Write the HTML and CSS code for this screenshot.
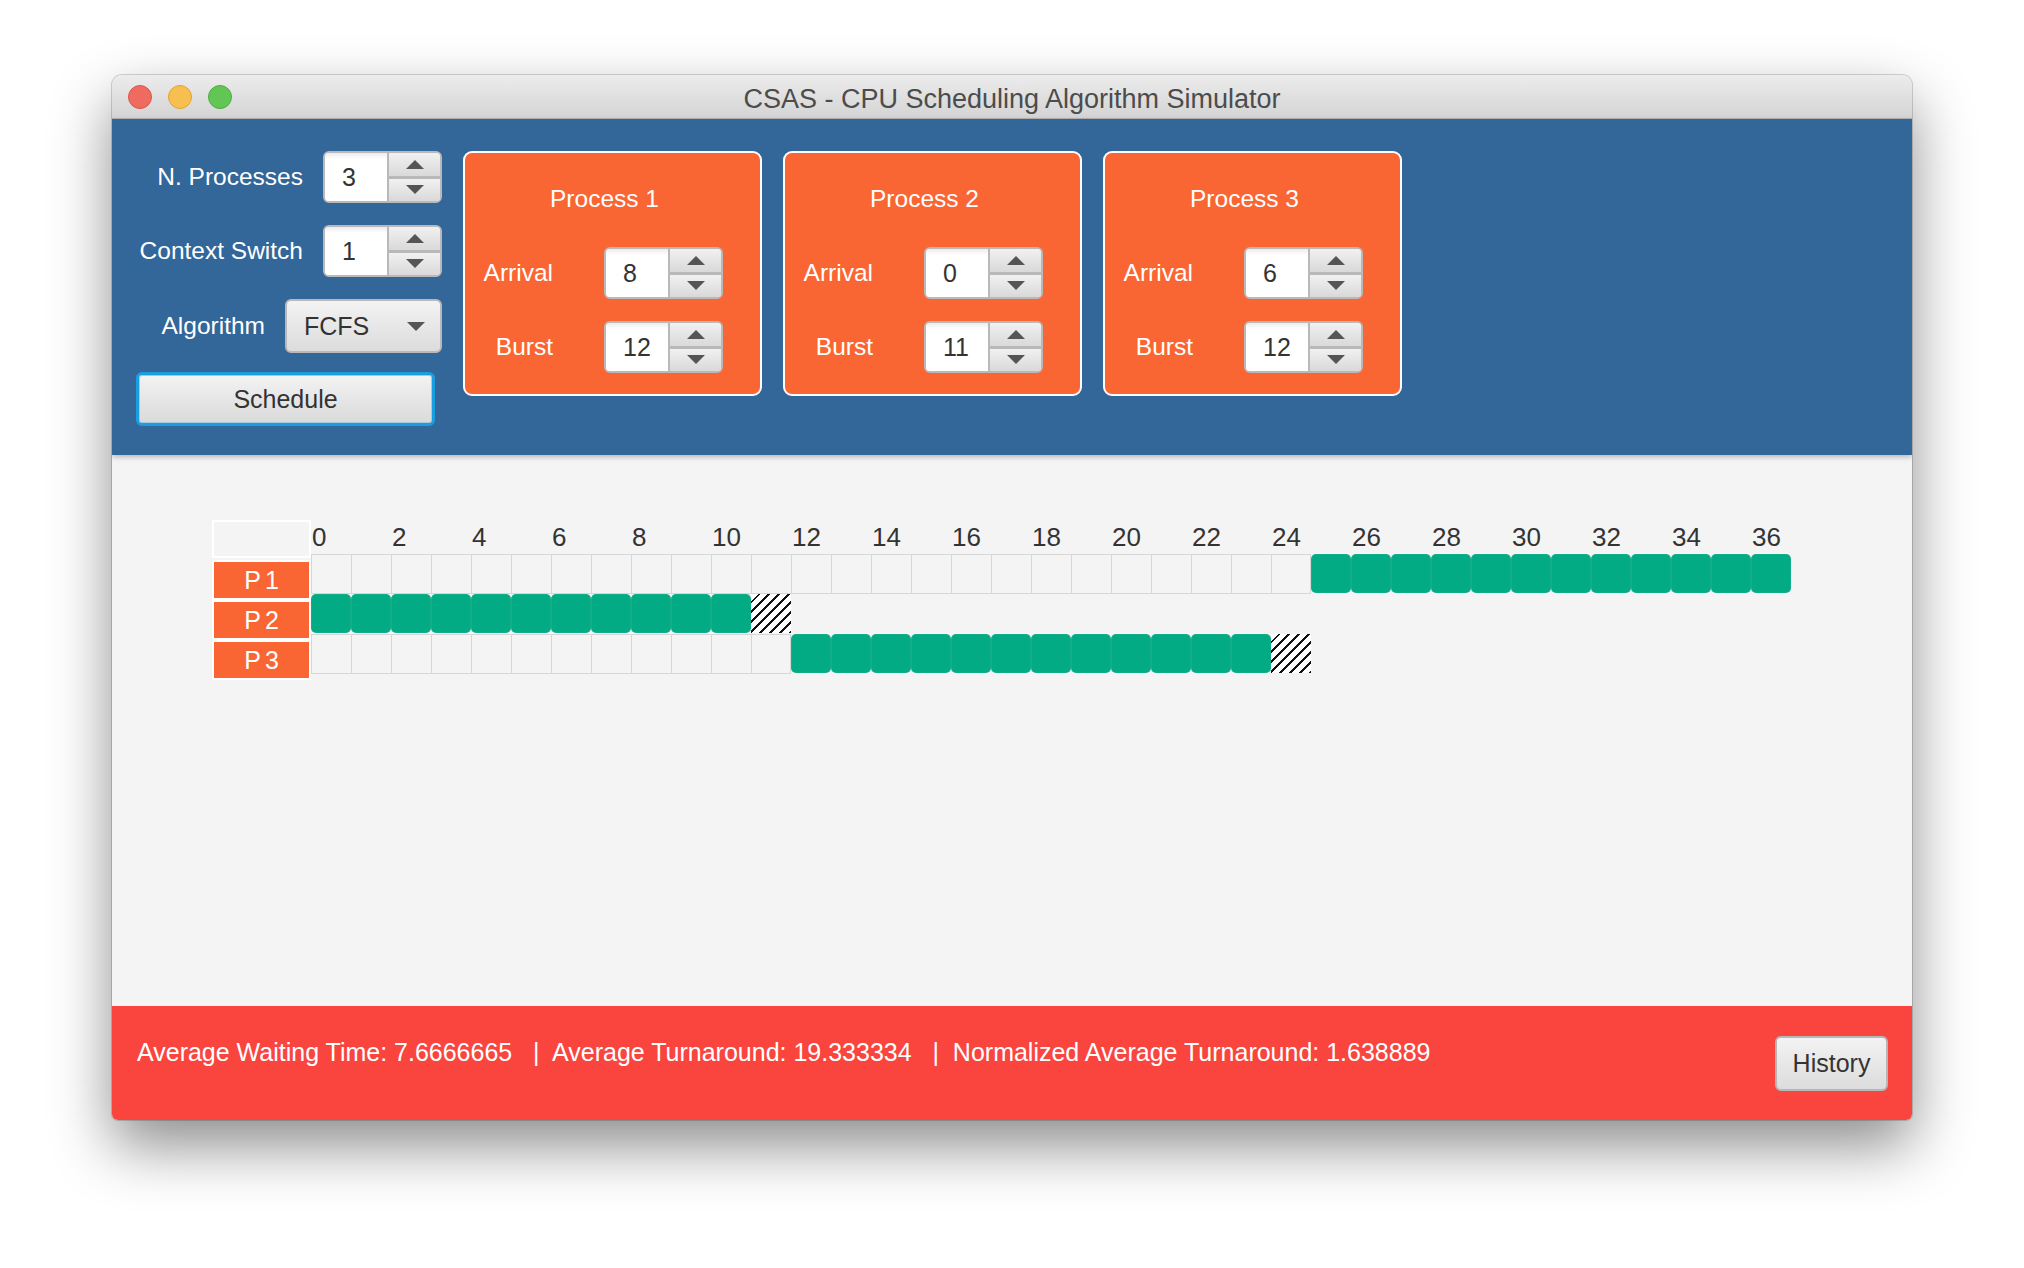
FILE: index.html
```html
<!DOCTYPE html>
<html lang="en">
<head>
<meta charset="utf-8">
<title>CSAS - CPU Scheduling Algorithm Simulator</title>
<link rel="stylesheet" href="styles.css">
</head>
<body>
<div class="window">
  <div class="titlebar">
    <div class="lights"><span class="light red"></span><span class="light yellow"></span><span class="light green"></span></div>
    <div class="title">CSAS - CPU Scheduling Algorithm Simulator</div>
    <div></div>
  </div>

  <div class="controls">
    <div class="form">
      <div class="form-row r1">
        <span class="lbl">N. Processes</span>
        <div class="spinner"><div class="spin-val">3</div><div class="spin-btns"><div class="spin-btn"><span class="arr-up"></span></div><div class="spin-btn down"><span class="arr-down"></span></div></div></div>
      </div>
      <div class="form-row r2">
        <span class="lbl">Context Switch</span>
        <div class="spinner"><div class="spin-val">1</div><div class="spin-btns"><div class="spin-btn"><span class="arr-up"></span></div><div class="spin-btn down"><span class="arr-down"></span></div></div></div>
      </div>
      <div class="form-row r3">
        <span class="lbl">Algorithm</span>
        <div class="combo"><span>FCFS</span><span class="arr-down"></span></div>
      </div>
      <button class="schedule">Schedule</button>
    </div>

    <div class="card">
      <div class="card-title">Process 1</div>
      <div class="card-row"><span class="lbl">Arrival</span>
        <div class="spinner"><div class="spin-val">8</div><div class="spin-btns"><div class="spin-btn"><span class="arr-up"></span></div><div class="spin-btn down"><span class="arr-down"></span></div></div></div>
      </div>
      <div class="card-row"><span class="lbl">Burst</span>
        <div class="spinner"><div class="spin-val">12</div><div class="spin-btns"><div class="spin-btn"><span class="arr-up"></span></div><div class="spin-btn down"><span class="arr-down"></span></div></div></div>
      </div>
    </div>

    <div class="card">
      <div class="card-title">Process 2</div>
      <div class="card-row"><span class="lbl">Arrival</span>
        <div class="spinner"><div class="spin-val">0</div><div class="spin-btns"><div class="spin-btn"><span class="arr-up"></span></div><div class="spin-btn down"><span class="arr-down"></span></div></div></div>
      </div>
      <div class="card-row"><span class="lbl">Burst</span>
        <div class="spinner"><div class="spin-val">11</div><div class="spin-btns"><div class="spin-btn"><span class="arr-up"></span></div><div class="spin-btn down"><span class="arr-down"></span></div></div></div>
      </div>
    </div>

    <div class="card">
      <div class="card-title">Process 3</div>
      <div class="card-row"><span class="lbl">Arrival</span>
        <div class="spinner"><div class="spin-val">6</div><div class="spin-btns"><div class="spin-btn"><span class="arr-up"></span></div><div class="spin-btn down"><span class="arr-down"></span></div></div></div>
      </div>
      <div class="card-row"><span class="lbl">Burst</span>
        <div class="spinner"><div class="spin-val">12</div><div class="spin-btns"><div class="spin-btn"><span class="arr-up"></span></div><div class="spin-btn down"><span class="arr-down"></span></div></div></div>
      </div>
    </div>
  </div>

  <div class="chart-area">
    <div class="gantt">
      <div class="names">
        <div class="name-head"></div>
        <div class="name">P1</div>
        <div class="name">P2</div>
        <div class="name">P3</div>
      </div>
      <div class="timeline">
        <div class="ticks"><span>0</span><span>2</span><span>4</span><span>6</span><span>8</span><span>10</span><span>12</span><span>14</span><span>16</span><span>18</span><span>20</span><span>22</span><span>24</span><span>26</span><span>28</span><span>30</span><span>32</span><span>34</span><span>36</span></div>
        <div class="row">
          <div class="empty" style="width:1000px"></div>
          <div class="blk"></div><div class="blk"></div><div class="blk"></div><div class="blk"></div><div class="blk"></div><div class="blk"></div><div class="blk"></div><div class="blk"></div><div class="blk"></div><div class="blk"></div><div class="blk"></div><div class="blk"></div>
        </div>
        <div class="row">
          <div class="blk"></div><div class="blk"></div><div class="blk"></div><div class="blk"></div><div class="blk"></div><div class="blk"></div><div class="blk"></div><div class="blk"></div><div class="blk"></div><div class="blk"></div><div class="blk"></div>
          <div class="hatch"></div>
        </div>
        <div class="row">
          <div class="empty" style="width:480px"></div>
          <div class="blk"></div><div class="blk"></div><div class="blk"></div><div class="blk"></div><div class="blk"></div><div class="blk"></div><div class="blk"></div><div class="blk"></div><div class="blk"></div><div class="blk"></div><div class="blk"></div><div class="blk"></div>
          <div class="hatch"></div>
        </div>
      </div>
    </div>
  </div>

  <div class="footer">
    <div class="stats">Average Waiting Time: 7.6666665   |  Average Turnaround: 19.333334   |  Normalized Average Turnaround: 1.638889</div>
    <button class="history">History</button>
  </div>
</div>
</body>
</html>
```

FILE: styles.css
```css
* { box-sizing: border-box; }
html, body { margin: 0; }
body {
  background: #ffffff;
  padding: 75px 0 0 112px;
  height: 1268px;
  overflow: hidden;
  font-family: "Liberation Sans", Arial, sans-serif;
}
.window {
  width: 1800px;
  height: 1045px;
  border-radius: 10px 10px 6px 6px;
  overflow: hidden;
  display: flex;
  flex-direction: column;
  background: #f4f4f4;
  box-shadow: 0 26px 60px rgba(0, 0, 0, 0.45), 0 0 0 1px rgba(0, 0, 0, 0.16);
}

/* title bar */
.titlebar {
  height: 44px;
  flex: none;
  display: grid;
  grid-template-columns: 1fr auto 1fr;
  align-items: center;
  background: linear-gradient(#ececec, #d4d4d4);
  border-bottom: 1px solid #b4b4b4;
  padding-top: 1px;
}
.lights { display: flex; gap: 16px; padding-left: 16px; }
.light { width: 24px; height: 24px; border-radius: 50%; }
.red { background: #ef6b60; border: 1px solid #d9554b; }
.yellow { background: #f7bf4f; border: 1px solid #dfa337; }
.green { background: #62c655; border: 1px solid #4fab42; }
.title { font-size: 27px; color: #4c4c4c; padding-top: 4px; }

/* controls panel */
.controls {
  height: 336px;
  flex: none;
  background: #336699;
  display: flex;
  align-items: flex-start;
  gap: 21px;
  padding: 32px 0 0 24px;
  position: relative;
  z-index: 1;
  box-shadow: 0 2px 5px rgba(0, 0, 0, 0.25);
}
.form { width: 306px; display: flex; flex-direction: column; }
.form-row {
  display: flex;
  justify-content: flex-end;
  align-items: center;
  gap: 20px;
  color: #fff;
  font-size: 24.5px;
}
.form-row.r1, .form-row.r2 { height: 52px; margin-bottom: 22px; }
.form-row.r3 { height: 54px; margin-bottom: 19px; }

.spinner {
  display: flex;
  width: 119px;
  height: 52px;
  flex: none;
  border: 2px solid #b9b9b9;
  border-radius: 6px;
  overflow: hidden;
  background: #fff;
}
.spin-val {
  flex: 1;
  padding-left: 17px;
  font-size: 25px;
  line-height: 48px;
  color: #333;
  background: linear-gradient(#ececec, #fff 6px);
}
.spin-btns {
  width: 53px;
  display: flex;
  flex-direction: column;
  border-left: 2px solid #b9b9b9;
}
.spin-btn {
  flex: 1;
  display: flex;
  align-items: center;
  justify-content: center;
  background: linear-gradient(#f1f1f1, #d9d9d9);
}
.spin-btn.down { border-top: 3px solid #b9b9b9; }
.arr-up {
  width: 0; height: 0;
  border-left: 9px solid transparent;
  border-right: 9px solid transparent;
  border-bottom: 9px solid #555;
}
.arr-down {
  width: 0; height: 0;
  border-left: 9px solid transparent;
  border-right: 9px solid transparent;
  border-top: 9px solid #555;
}

.combo {
  width: 157px;
  height: 54px;
  border: 2px solid #b9b9b9;
  border-radius: 6px;
  background: linear-gradient(#f3f3f3, #dcdcdc);
  display: flex;
  align-items: center;
  justify-content: space-between;
  padding: 0 15px 0 17px;
  font-size: 25px;
  color: #333;
}

.schedule {
  width: 299px;
  height: 54px;
  border: 3px solid #1b9ee0;
  border-radius: 6px;
  background: linear-gradient(#f3f3f3, #dadada);
  box-shadow: inset 0 0 0 1px #a7c9dc;
  font: 25px "Liberation Sans", Arial, sans-serif;
  color: #333;
  padding: 0;
}

.card {
  width: 299px;
  height: 245px;
  flex: none;
  border: 2px solid #fff;
  border-radius: 9px;
  background: #f96633;
  display: flex;
  flex-direction: column;
  padding-top: 31px;
  color: #fff;
  font-size: 24.5px;
}
.card-title {
  text-align: center;
  padding-right: 16px;
  line-height: 30px;
  margin-bottom: 33px;
}
.card-row { display: flex; align-items: center; height: 52px; }
.card-row + .card-row { margin-top: 22px; }
.card-row .lbl { width: 88px; text-align: right; margin-right: 51px; white-space: nowrap; }

/* gantt chart */
.chart-area { flex: 1; padding: 65px 0 0 100px; }
.gantt { display: flex; }
.names { width: 99px; flex: none; }
.name-head { height: 38px; border: 2px solid #fff; margin-bottom: 2px; }
.name {
  height: 40px;
  border: 2px solid #fff;
  background: #f96633;
  color: #fff;
  font-size: 25px;
  text-align: center;
  line-height: 36px;
  letter-spacing: 4px;
  padding-left: 4px;
}
.ticks { display: flex; height: 34px; font-size: 26px; color: #333; line-height: 34px; padding-left: 1px; }
.ticks span { width: 80px; flex: none; }
.row { display: flex; height: 40px; align-items: flex-start; }
.empty {
  height: 40px;
  flex: none;
  border: 1px solid #d7d7d7;
  border-left: none;
  background-image: linear-gradient(to right, #d7d7d7 1px, transparent 1px);
  background-size: 40px 100%;
}
.blk {
  width: 40px;
  height: 39px;
  flex: none;
  background: #02ab83;
  border-radius: 5px;
  box-shadow: inset 0 0 0 1px rgba(255, 255, 255, 0.06);
}
.hatch {
  width: 40px;
  height: 39px;
  flex: none;
  background: repeating-linear-gradient(135deg, #fff 0 5px, #111 5px 7px);
}

/* footer */
.footer {
  height: 114px;
  flex: none;
  background: #fa453f;
  display: flex;
  justify-content: space-between;
  align-items: flex-start;
  padding: 30px 24px 0 25px;
}
.stats { color: #fff; font-size: 25px; line-height: 32px; white-space: pre; }
.history {
  width: 113px;
  height: 55px;
  border: 2px solid #b7b7b7;
  border-radius: 6px;
  background: linear-gradient(#f3f3f3, #dcdcdc);
  font: 25px "Liberation Sans", Arial, sans-serif;
  color: #333;
  padding: 0;
}
```
